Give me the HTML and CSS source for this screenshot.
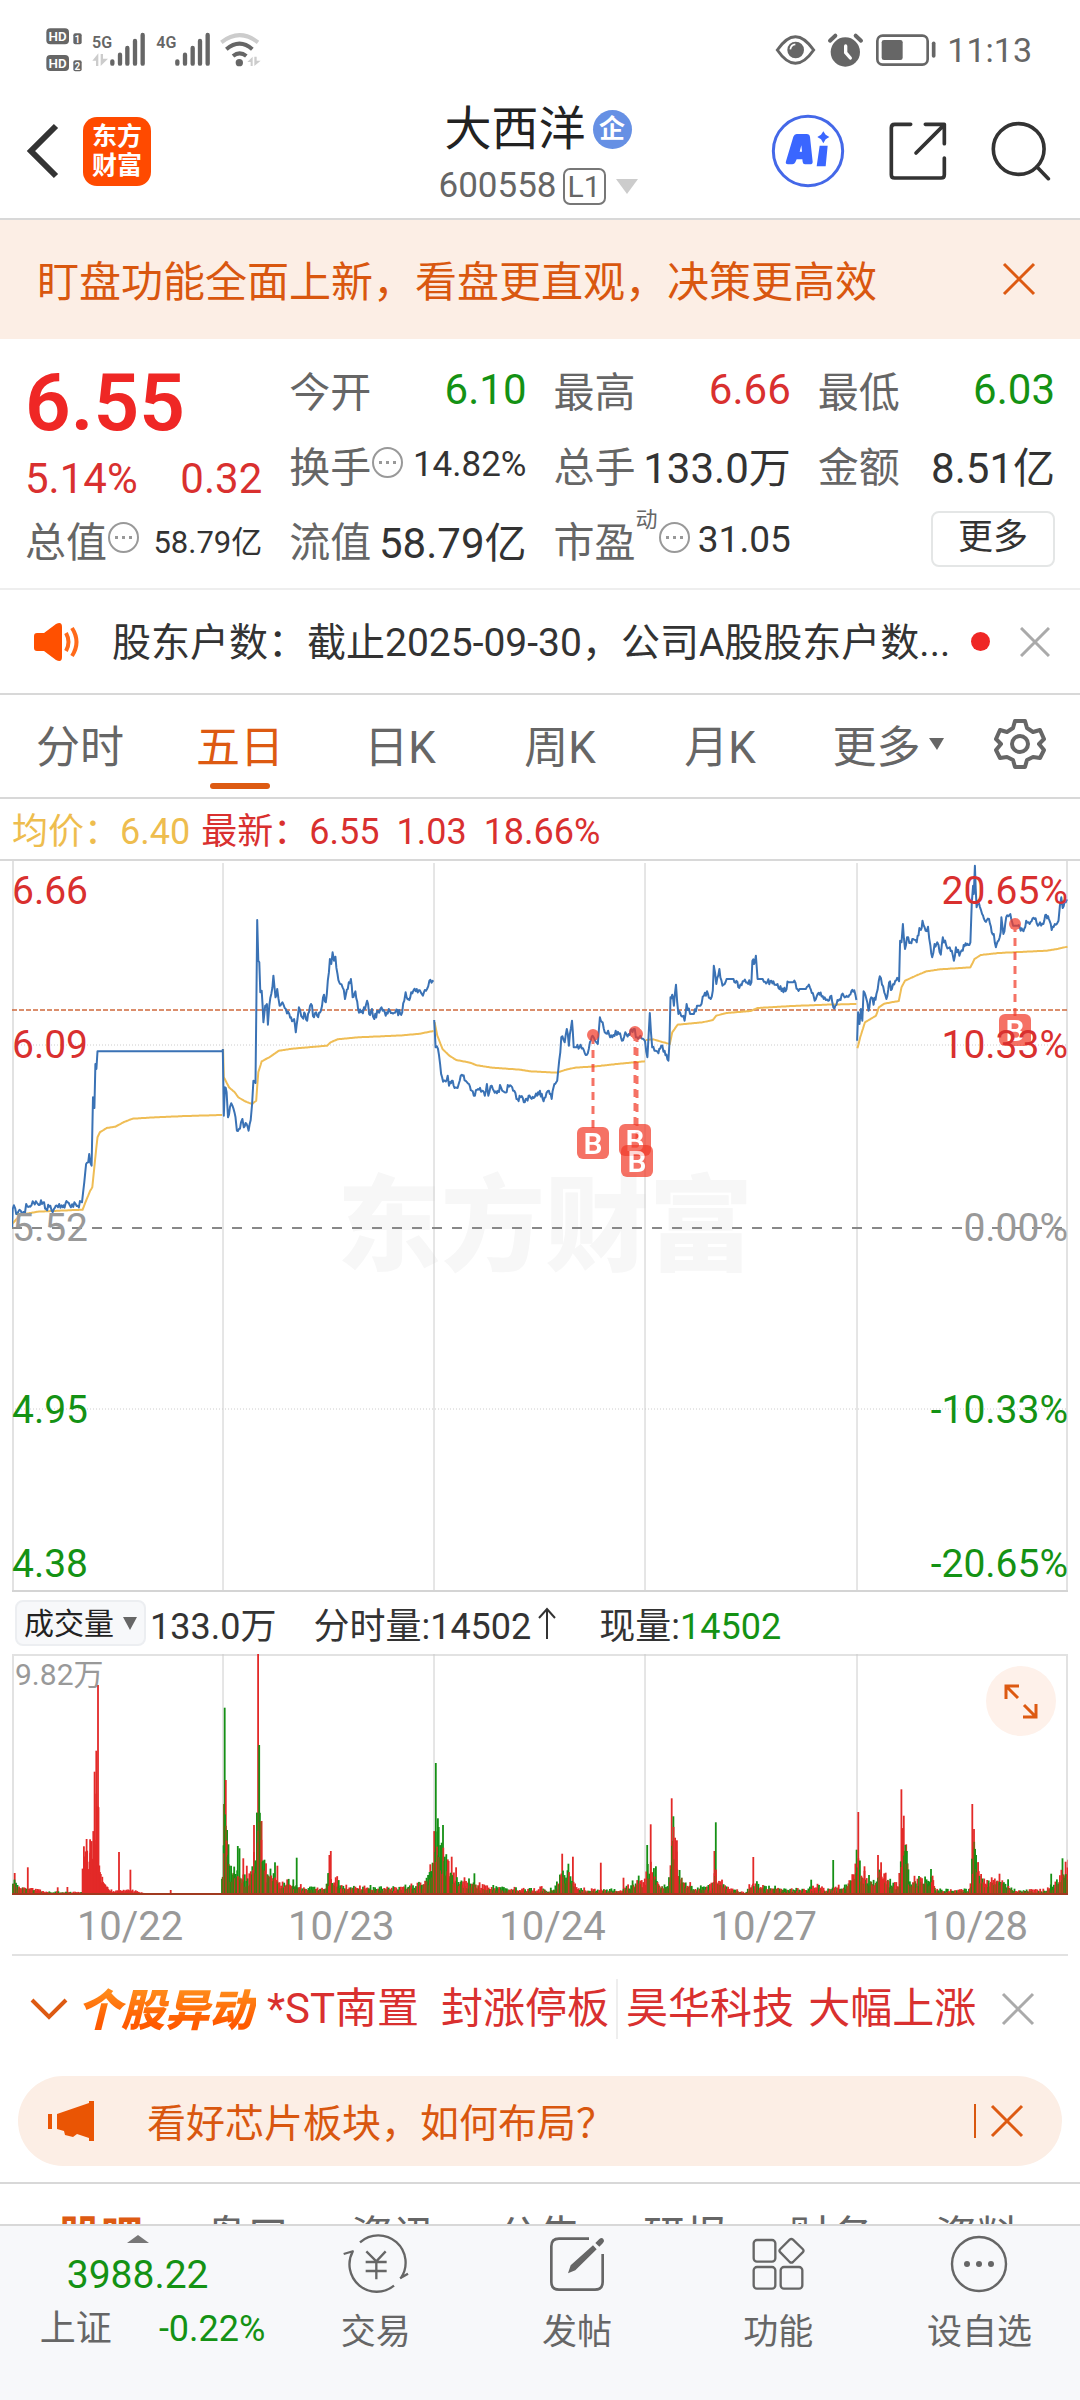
FILE: index.html
```html
<!DOCTYPE html>
<html lang="zh-CN">
<head>
<meta charset="utf-8">
<meta name="viewport" content="width=device-width">
<title>大西洋 600558</title>
<link rel="stylesheet" href="styles.css">
</head>
<body>
<header class="top">
  <div class="status">
    <svg class="status-left" viewBox="48 18 648 144" aria-hidden="true">
      <g fill="#666">
        <rect x="49" y="25" width="68" height="48" rx="12"/><rect x="130" y="40" width="25" height="33" rx="6"/>
        <rect x="49" y="105" width="68" height="48" rx="12"/><rect x="130" y="121" width="25" height="33" rx="6"/>
      </g>
      <g class="st-badge"><text x="83" y="63" font-size="40">HD</text><text x="83" y="143" font-size="40">HD</text><text x="142" y="68" font-size="30">1</text><text x="142" y="149" font-size="30">2</text></g>
      <g class="st-net"><text x="186" y="84">5G</text><text x="379" y="84">4G</text></g>
      <g fill="#ccc"><path d="M187 122l18-22v38h-7v-16zM212 138v-36h7v14h15zM652 126l16-16v28h-6v-12zM673 138v-28h7v12h12z"/></g>
      <g stroke="#666" stroke-width="13" stroke-linecap="round">
        <path d="M247 124v7M270 104v27M292 84v47M315 63v68M338 45v86M442 124v7M465 104v27M488 84v47M510 63v68M533 45v86"/>
      </g>
      <g fill="none" stroke-width="12"><path d="M574 67Q629 24 684 67" stroke="#ccc"/><path d="M589 88Q629 54 667 88M609 108Q629 92 649 108" stroke="#666"/></g>
      <circle cx="628" cy="128" r="11" fill="#666"/>
    </svg>
    <div class="status-right">
      <svg class="status-icons" viewBox="78 34 486 108" aria-hidden="true">
        <g fill="none" stroke="#666" stroke-width="9"><path d="M85 88Q139 8 194 88Q139 168 85 88Z"/><rect x="385" y="45" width="151" height="87" rx="16" stroke-width="8"/></g>
        <circle cx="140" cy="88" r="25" fill="#666"/><path d="M124 86q2-14 15-15" fill="none" stroke="#fff" stroke-width="5"/>
        <circle cx="289" cy="94" r="44" fill="#666"/><path d="M243 60l16-15M320 45l16 15" stroke="#666" stroke-width="12" stroke-linecap="round"/>
        <path d="M290 76v20l14 16" fill="none" stroke="#fff" stroke-width="10" stroke-linecap="round"/>
        <rect x="398" y="58" width="63" height="60" rx="7" fill="#666"/><path d="M554 68v38" stroke="#666" stroke-width="11" stroke-linecap="round"/>
      </svg>
      <time>11:13</time>
    </div>
  </div>
  <div class="titlebar">
    <div class="title-left">
      <button class="icon-btn" aria-label="返回"><svg width="36" height="60" viewBox="0 0 36 60"><path d="M31 5L6 30l25 25" fill="none" stroke="#333" stroke-width="6"/></svg></button>
      <a class="logo" href="#"><span>东方</span><span>财富</span></a>
    </div>
    <div class="title-mid">
      <h1>大西洋<span class="corp">企</span></h1>
      <button class="code">600558<span class="level">L1</span><svg width="22" height="15" viewBox="0 0 22 15"><path d="M0 0h22L11 15z" fill="#ccc"/></svg></button>
    </div>
    <div class="title-right">
      <button class="icon-btn" aria-label="Ai"><svg width="74" height="74" viewBox="65 283 222 222"><circle cx="176" cy="394" r="104" fill="none" stroke="#4468e8" stroke-width="9"/><path d="M142 343h30q9 0 10 9l8 74q0 8-8 8h-15q-6 0-7-7l-1-8h-17l-4 9q-3 6-9 6h-13q-9 0-6-9l22-74q3-8 10-8zM151 396h7l-2-19z" fill="#3a66ff" fill-rule="evenodd"/><path d="M211 378h24l-6 62h-27zM222 335l7 10 11 7-11 7-7 12-7-12-11-7 11-7z" fill="#3a66ff"/></svg></button>
      <button class="icon-btn" aria-label="分享"><svg width="60" height="60" viewBox="410 304 180 180"><path d="M478 314h-48q-10 0-10 10v141q0 10 10 10h139q10 0 10-10v-50M522 314h57v58M576 318l-82 82" fill="none" stroke="#333" stroke-width="11" stroke-linecap="round" stroke-linejoin="round"/></svg></button>
      <button class="icon-btn" aria-label="搜索"><svg width="60" height="60" viewBox="722 301 182 182"><circle cx="806" cy="386" r="77" fill="none" stroke="#333" stroke-width="11"/><path d="M861 440l35 36" stroke="#333" stroke-width="11" stroke-linecap="round"/></svg></button>
    </div>
  </div>
</header>

<main>
  <section class="banner"><p>盯盘功能全面上新，看盘更直观，决策更高效</p><button class="icon-btn orange" aria-label="关闭"><svg width="34" height="34" viewBox="0 0 34 34"><path d="M2 2l30 30M32 2L2 32"/></svg></button></section>

  <section class="quote">
    <div class="price red"><strong>6.55</strong><div class="pair"><span>5.14%</span><span>0.32</span></div></div>
    <div class="cell"><span class="k">今开</span><span class="green">6.10</span></div>
    <div class="cell"><span class="k">最高</span><span class="red">6.66</span></div>
    <div class="cell"><span class="k">最低</span><span class="green">6.03</span></div>
    <div class="cell"><span class="k">换手<i class="dots"></i></span><span class="v35">14.82%</span></div>
    <div class="cell"><span class="k">总手</span><span>133.0万</span></div>
    <div class="cell"><span class="k">金额</span><span>8.51亿</span></div>
    <div class="cell"><span class="k">总值<i class="dots"></i></span><span class="v32">58.79亿</span></div>
    <div class="cell"><span class="k">流值</span><span>58.79亿</span></div>
    <div class="cell"><span class="k">市盈<sup>动</sup><i class="dots"></i></span><span class="v38">31.05</span></div>
    <div class="cell end"><button class="more">更多</button></div>
  </section>

  <section class="notice">
    <svg width="46" height="38" viewBox="0 0 46 38"><path d="M0 13q0-3 3-3h7L22 1q6-3 6 3v30q0 6-6 3L10 28H3q-3 0-3-3z" fill="#ff5000"/><path d="M32 10q5 9 0 18M38 5q9 14 0 28" fill="none" stroke="#ff6a1a" stroke-width="4"/></svg>
    <p>股东户数：截止2025-09-30，公司A股股东户数...</p>
    <span class="dot"></span>
    <button class="icon-btn grey" aria-label="关闭"><svg width="30" height="30" viewBox="0 0 30 30"><path d="M1 1l28 28M29 1L1 29"/></svg></button>
  </section>

  <nav class="periods">
    <button>分时</button><button class="on">五日</button><button>日K</button><button>周K</button><button>月K</button><button class="drop">更多<svg width="15" height="12" viewBox="0 0 15 12"><path d="M0 0h15L8 12z" fill="#666"/></svg></button>
    <button aria-label="设置"><svg width="52" height="52" viewBox="0 0 52 52" fill="none" stroke="#666" stroke-width="4" stroke-linejoin="round"><path d="M21 3h10l2 7 6 4 7-2 4 9-5 5 5 6-4 8-7-1-6 3-2 7H21l-2-7-6-3-7 1-4-8 5-6-5-5 4-9 7 2 6-4z"/><circle cx="26" cy="26" r="8"/></svg></button>
  </nav>

  <p class="legend"><span class="avg">均价：<b>6.40</b></span><span class="red">最新：<b>6.55</b><b>1.03</b><b>18.66%</b></span></p>

  <figure class="chart">
    <svg viewBox="0 0 1056 731" aria-label="五日走势">
      <text class="mark" x="533" y="402" text-anchor="middle">东方财富</text>
      <path d="M0 184h1056M0 548h1056" stroke="#ccc" stroke-dasharray="1 2"/>
      <path d="M211 2v728M422 2v728M633 2v728M845 2v728" stroke="#ccc"/>
      <path d="M1 0v730M1055 0v730" stroke="#e2e2e2" stroke-width="2"/>
      <path d="M0 730h1056" stroke="#d4d4d4" stroke-width="2"/>
      <path d="M0 367h1056" stroke="#888" stroke-width="2" stroke-dasharray="10 10"/>
      <path d="M0 149h1056" stroke="#cf6a3c" stroke-width="1.4" stroke-dasharray="5 2"/>
      <g id="avg" fill="none" stroke="#efbd55" stroke-width="2"></g>
      <g id="price" fill="none" stroke="#3a72b5" stroke-width="2" stroke-linejoin="round"></g>
      <g class="buys" opacity=".72">
        <path d="M581 175v92M623 172v92M625 173v112M1003 63v92" stroke="#f23c2a" stroke-width="3" stroke-dasharray="8 6"/>
        <g fill="#f23c2a"><circle cx="581" cy="174" r="6"/><circle cx="623" cy="171" r="6"/><circle cx="625" cy="173" r="6"/><circle cx="1003" cy="63" r="6"/></g>
      </g>
      <g class="tag"><rect x="565" y="266" width="32" height="32" rx="6"/><text x="581" y="293">B</text></g>
      <g class="tag"><rect x="607" y="263" width="32" height="32" rx="6"/><text x="623" y="290">B</text></g>
      <g class="tag"><rect x="609" y="284" width="32" height="32" rx="6"/><text x="625" y="311">B</text></g>
      <g class="tag"><rect x="987" y="153" width="32" height="32" rx="6"/><text x="1003" y="180">B</text></g>
    </svg>
    <div class="scale y1 red"><span>6.66</span><span>20.65%</span></div>
    <div class="scale y2 red"><span>6.09</span><span>10.33%</span></div>
    <div class="scale y3 mid"><span>5.52</span><span>0.00%</span></div>
    <div class="scale y4 green"><span>4.95</span><span>-10.33%</span></div>
    <div class="scale y5 green"><span>4.38</span><span>-20.65%</span></div>
  </figure>

  <div class="volbar">
    <span class="picker"><select aria-label="指标"><option>成交量</option></select><svg width="14" height="13" viewBox="0 0 14 13"><path d="M0 0h14L7 13z" fill="#666"/></svg></span>
    <span>133.0万</span><span class="v2">分时量:14502<svg width="20" height="32" viewBox="0 0 20 32"><path d="M10 32V2M2 11l8-9 8 9" fill="none" stroke="#333" stroke-width="2"/></svg></span><span class="v3">现量:<em class="green">14502</em></span>
  </div>

  <figure class="volume">
    <svg viewBox="0 0 1056 242" aria-label="成交量">
      <path d="M0 1h1056M1 0v241M1055 0v241" stroke="#e2e2e2" stroke-width="2"/>
      <path d="M211 0v240M422 0v240M633 0v240M845 0v240" stroke="#ccc"/>
      <g id="bars"></g>
      <path d="M0 240h1056" stroke="#a03a20" stroke-width="2"/>
    </svg>
    <span class="vmax">9.82万</span>
    <button class="expand" aria-label="全屏"><svg width="34" height="35" viewBox="0 0 34 35"><path d="M15 2H2v13M2 2l12 12M19 33h13V20M32 33L20 21" fill="none" stroke="#dd5a12" stroke-width="3"/></svg></button>
  </figure>
  <div class="dates"><span>10/22</span><span>10/23</span><span>10/24</span><span>10/27</span><span>10/28</span></div>

  <section class="moves">
    <button class="icon-btn orange" aria-label="展开"><svg class="bold" width="38" height="24" viewBox="0 0 38 24"><path d="M2 3l17 17L36 3"/></svg></button>
    <strong>个股异动</strong>
    <a class="first" href="#"><span>*ST南置</span><span>封涨停板</span></a>
    <a href="#"><span>昊华科技</span><span>大幅上涨</span></a>
    <button class="icon-btn grey" aria-label="关闭"><svg width="34" height="34" viewBox="0 0 34 34"><path d="M2 2l30 30M32 2L2 32"/></svg></button>
  </section>

  <section class="promo">
    <svg width="46" height="40" viewBox="0 0 46 40"><path d="M0 13h4v15H0zM9 13L41 2V0h5v40h-5v-3l-12-4-4 3-8-2-1-4-7-2z" fill="#ea5504"/></svg>
    <a href="#">看好芯片板块，如何布局？</a>
    <button class="icon-btn orange" aria-label="关闭"><svg width="34" height="34" viewBox="0 0 34 34"><path d="M2 2l30 30M32 2L2 32"/></svg></button>
  </section>

  <nav class="sections"><a class="on" href="#">股吧</a><a href="#">盘口</a><a href="#">资讯</a><a href="#">公告</a><a href="#">研报</a><a href="#">财务</a><a href="#">资料</a></nav>
</main>

<nav class="bottom">
  <a class="index" href="#">
    <svg width="22" height="8" viewBox="0 0 22 8"><path d="M11 0l11 8H0z" fill="#777"/></svg>
    <span class="pt green">3988.22</span>
    <span class="chg"><span>上证</span><span class="green">-0.22%</span></span>
  </a>
  <a href="#"><svg width="68" height="62" viewBox="64 38 204 186" fill="none" stroke="#666" stroke-width="7"><path d="M118 66A82 82 0 0 1 240 174M220 196A82 82 0 0 1 97 92M69 101l30-9M262 160l-24 14M137 93l30 30 28-30M135 125h63M135 152h63M167 123v54"/></svg>交易</a>
  <a href="#"><svg width="68" height="62" viewBox="669 38 204 186"><path d="M807 55h-90q-23 0-23 23v107q0 23 23 23h108q23 0 23-23v-84" fill="none" stroke="#666" stroke-width="8"/><path d="M819 75l11 12-64 63-22 9 8-24zM826 68l12-12q7-6 12 0 5 6-1 12l-11 11z" fill="#666"/></svg>发帖</a>
  <a href="#"><svg width="68" height="62" viewBox="1272 38 204 186" fill="none" stroke="#666" stroke-width="7"><rect x="1301" y="59" width="65" height="65" rx="10"/><rect x="1301" y="140" width="65" height="65" rx="10"/><rect x="1382" y="140" width="65" height="65" rx="10"/><path d="M1409 58q5-4 10 0l29 28q5 5 0 10l-29 29q-5 4-10 0l-28-29q-5-5 0-10z"/></svg>功能</a>
  <a href="#"><svg width="68" height="62" viewBox="0 0 68 62"><circle cx="34" cy="31" r="27" fill="none" stroke="#666" stroke-width="2.4"/><g fill="#666"><circle cx="22" cy="31" r="3"/><circle cx="34" cy="31" r="3"/><circle cx="46" cy="31" r="3"/></g></svg>设自选</a>
</nav>
<script src="chart.js"></script>
</body>
</html>
```
FILE: styles.css
```css
* { box-sizing: border-box; }
body { margin: 0; height: 100vh; display: flex; flex-direction: column; background: #fff; color: #333; font-family: Roboto, "Noto Sans CJK SC", sans-serif; font-size: 42px; }
p, h1, figure { margin: 0; font-weight: 400; }
svg { display: block; flex: none; }
button { font: inherit; color: inherit; background: none; border: 0; padding: 0; }
a { color: inherit; text-decoration: none; }
em, i { font-style: normal; }
main { flex: 1; min-height: 0; overflow: hidden; }
.red { color: #d9302f; }
.green { color: #149214; }
.icon-btn { display: flex; flex: none; }
.orange svg, .grey svg { fill: none; stroke: #dd5a12; stroke-width: 3; }
.grey svg { stroke: #aaa; }
.orange .bold { stroke-width: 4; }

.top { border-bottom: 2px solid #d8d8d8; }
.status { height: 84px; padding: 16px 48px 0 46px; display: flex; justify-content: space-between; align-items: center; }
.status-left { width: 216px; height: 48px; }
.st-badge text { fill: #fff; font-weight: 600; text-anchor: middle; }
.st-net text { fill: #666; font-size: 48px; font-weight: 600; }
.status-right { display: flex; align-items: center; gap: 10px; color: #666; font-size: 34px; }
.status-icons { width: 162px; height: 36px; }
.titlebar { height: 134px; padding: 0 29px 0 25px; display: grid; grid-template-columns: 1fr auto 1fr; align-items: center; }
.title-left { display: flex; align-items: center; gap: 22px; }
.logo { width: 68px; height: 69px; border-radius: 14px; background: #ff4a00; color: #fff; font-size: 25px; font-weight: 700; line-height: 29px; display: flex; flex-direction: column; justify-content: center; align-items: center; }
.title-mid { display: flex; flex-direction: column; align-items: center; padding-top: 6px; }
h1 { display: flex; align-items: center; gap: 7px; font-size: 47px; line-height: 64px; color: #222; }
.corp { width: 39px; height: 39px; border-radius: 50%; background: #6690e4; color: #fff; font-size: 26px; line-height: 38px; font-weight: 700; text-align: center; }
.code { display: flex; align-items: center; gap: 6px; font-size: 35px; line-height: 50px; color: #666; }
.level { border: 2px solid #777; border-radius: 7px; font-size: 30px; line-height: 33px; padding: 0 3px; }
.code svg { margin-left: 4px; }
.title-right { display: flex; align-items: center; justify-content: flex-end; gap: 43px; }

.banner { height: 119px; background: #fceee5; color: #d9570f; padding: 0 44px 2px 37px; display: flex; justify-content: space-between; align-items: center; }

.quote { padding: 14px 25px 10px; display: grid; grid-template-columns: repeat(4, 1fr); grid-auto-rows: 75px; column-gap: 27px; border-bottom: 2px solid #eee; }
.price { grid-row: span 2; display: flex; flex-direction: column; }
.price strong { font-size: 80px; line-height: 100px; font-weight: 600; color: #ef2725; }
.pair, .cell { display: flex; justify-content: space-between; align-items: center; white-space: nowrap; }
.pair { line-height: 52px; }
.cell { padding-bottom: 3px; }
.k { display: flex; align-items: center; color: #666; font-size: 41px; }
.k sup { font-size: 22px; align-self: flex-start; line-height: 22px; vertical-align: baseline; }
.dots { width: 31px; height: 31px; margin: 0 0 4px 1px; border: 2px solid #999; border-radius: 50%; background: radial-gradient(circle, #999 2px, transparent 2px) 0 0 / 7px 100% content-box; background-repeat: repeat-x; padding: 0 3px; }
.v32 { font-size: 31px; }
.v35 { font-size: 35px; }
.v38 { font-size: 37px; }
.end { justify-content: flex-end; }
.more { width: 124px; height: 56px; border: 2px solid #e4e6e6; border-radius: 8px; font-size: 35px; line-height: 48px; padding-bottom: 3px; }

.notice { height: 105px; padding: 0 30px 0 34px; display: flex; align-items: center; border-bottom: 2px solid #d8d8d8; font-size: 39px; }
.notice p { flex: 1; margin-left: 32px; padding-bottom: 5px; white-space: nowrap; }
.dot { width: 19px; height: 19px; border-radius: 50%; background: #ef2725; margin-right: 30px; }

.periods { height: 104px; display: grid; grid-template-columns: repeat(6, 4fr) 3fr; border-bottom: 2px solid #d8d8d8; color: #666; font-size: 44px; }
.periods button { display: flex; align-items: center; justify-content: center; gap: 8px; padding-bottom: 4px; white-space: nowrap; }
.periods .drop { padding-left: 16px; }
.periods .on { color: #dd5a12; position: relative; }
.periods .on::after { content: ""; position: absolute; left: 50%; bottom: 8px; width: 60px; margin-left: -30px; height: 6px; border-radius: 3px; background: #dd5a12; }

.legend { height: 62px; padding: 0 0 2px 12px; display: flex; align-items: center; gap: 11px; font-size: 36px; border-bottom: 2px solid #d8d8d8; }
.legend b { font-weight: 400; margin-right: 17px; }
.legend .avg b { margin: 0; }
.avg { color: #eebd4e; }

.chart, .volume { position: relative; margin: 0 12px; }
.chart svg, .volume > svg { width: 100%; height: auto; }
.mark { font-size: 104px; font-weight: 900; fill: #f7f7f7; }
.tag { opacity: .72; }
.tag rect { fill: #f23c2a; }
.tag text { fill: #fff; font-size: 30px; font-weight: 600; text-anchor: middle; }
.scale { position: absolute; left: 0; right: 0; display: flex; justify-content: space-between; font-size: 39px; line-height: 40px; margin-top: -19px; }
.mid, .vmax, .dates { color: #999; }
.y1 { top: 4%; }
.y2 { top: 25%; }
.y3 { top: 50%; }
.y4 { top: 75%; }
.y5 { top: 96%; }

.volbar { height: 62px; padding-left: 15px; display: flex; align-items: center; font-size: 36px; white-space: nowrap; }
.picker { display: flex; align-items: center; height: 46px; width: 131px; margin-right: 4px; border: 2px solid #eceef1; border-radius: 8px; background: #f7f8fa; padding-left: 7px; }
.picker select { appearance: none; border: 0; background: none; font: inherit; font-size: 30px; color: #222; padding: 0; width: 99px; }
.volbar .v2 { margin-left: 37px; display: flex; align-items: center; gap: 6px; }
.volbar .v3 { margin-left: 42px; }
.vmax { position: absolute; left: 3px; top: 6px; font-size: 30px; line-height: 30px; }
.expand { position: absolute; right: 12px; top: 12px; width: 70px; height: 70px; border-radius: 50%; background: #fef1ea; display: flex; align-items: center; justify-content: center; }
.dates { margin: 0 12px; height: 60px; display: grid; grid-template-columns: repeat(5, 1fr); font-size: 40px; line-height: 62px; text-align: center; border-bottom: 2px solid #e2e2e2; }
.dates span { padding-left: 25px; }

.moves { height: 108px; padding: 0 45px 3px 30px; display: flex; align-items: center; white-space: nowrap; color: #d9302f; }
.moves strong { margin: 0 11px 4px 9px; padding-right: 3px; font-size: 44px; font-weight: 900; font-style: italic; background: linear-gradient(#ff8a1a 25%, #ff5a00 75%); background-clip: text; color: transparent; }
.moves a { display: flex; gap: 14px; line-height: 60px; }
.moves .first { gap: 22px; padding-right: 7px; margin-right: 8px; border-right: 2px solid #eee; }
.moves .grey { margin-left: auto; }

.promo { height: 90px; margin: 12px 18px 16px; padding: 0 38px 0 30px; border-radius: 45px; background: #fceee5; color: #d9570f; display: flex; align-items: center; font-size: 39px; }
.promo a { flex: 1; margin-left: 53px; padding-bottom: 3px; }
.promo button { border-left: 2px solid #d9570f; padding-left: 14px; }

.sections { border-top: 2px solid #d8d8d8; padding: 28px 30px 0 28px; display: grid; grid-template-columns: repeat(7, 1fr); text-align: center; color: #666; line-height: 50px; }
.sections .on { color: #dd5a12; font-weight: 700; }

.bottom { height: 176px; border-top: 2px solid #d8d8d8; background: #f7f8fa; display: grid; grid-template-columns: 275fr repeat(4, 201fr); color: #666; font-size: 35px; }
.bottom a { display: flex; flex-direction: column; align-items: center; line-height: 50px; padding-top: 7px; gap: 13px; }
.bottom .index { padding-top: 9px; gap: 4px; }
.pt { font-size: 39px; line-height: 56px; }
.chg { display: flex; gap: 47px; margin-left: 30px; font-size: 36px; line-height: 44px; }
```
FILE: chart.js
```js
// Series are stored as flat x,y lists, five trading days each.
const price = [
  [35,1130,37,1075,44,1073,50,1090,60,1080,72,1090,76,1060,88,1068,95,1052,110,1060,128,1055,134,1075,146,1065,150,1080,162,1065,172,1060,182,1070,196,1055,206,1070,216,1055,226,1065,238,1055,242,1020,250,940,256,935,259,910,262,935,266,945,270,740,274,772,277,640,280,655,283,602,647,602],
  [647,595,650,795,653,710,658,725,662,800,668,768,675,765,684,800,688,840,694,835,700,815,704,805,708,830,716,820,722,840,728,808,732,760,736,690,742,697,747,208,750,330,753,335,756,425,760,420,765,515,770,465,775,460,778,522,782,465,788,430,794,375,800,440,805,415,812,465,820,455,830,475,840,490,848,512,854,505,859,545,864,505,868,470,878,500,886,490,892,510,903,460,912,500,918,485,924,500,932,480,941,432,946,455,952,390,958,325,962,340,966,305,970,330,974,318,980,370,988,400,995,410,1002,445,1010,415,1019,385,1024,440,1032,422,1040,475,1048,485,1060,475,1066,450,1072,490,1080,475,1087,505,1098,480,1108,470,1120,495,1132,480,1145,486,1168,485,1174,450,1178,425,1186,445,1194,425,1210,415,1225,430,1240,415,1247,390,1259,393],
  [1261,508,1265,590,1272,595,1278,640,1284,680,1292,690,1300,675,1304,705,1312,690,1320,712,1332,700,1341,672,1352,690,1362,700,1370,720,1379,735,1388,715,1400,720,1408,735,1414,700,1418,735,1428,705,1440,722,1455,710,1465,725,1478,708,1490,720,1500,745,1512,740,1524,755,1535,735,1550,742,1560,735,1568,720,1576,745,1584,740,1594,720,1602,745,1610,700,1618,690,1624,630,1630,560,1640,575,1646,535,1652,585,1661,510,1666,590,1674,590,1686,582,1696,600,1707,608,1713,575,1721,555,1728,570,1736,580,1742,500,1750,515,1756,545,1766,540,1778,560,1788,540,1798,550,1806,570,1816,545,1826,550,1840,535,1850,560,1860,555,1873,572],
  [1873,570,1880,620,1887,487,1894,590,1904,600,1912,608,1920,585,1930,600,1941,630,1944,580,1947,440,1952,432,1957,465,1963,402,1970,490,1978,495,1988,510,1994,460,2004,490,2015,490,2024,465,2034,465,2044,435,2056,430,2064,445,2070,420,2073,345,2080,400,2089,355,2098,405,2110,385,2130,385,2147,412,2160,392,2182,395,2185,330,2190,340,2195,315,2200,385,2215,385,2228,395,2240,390,2258,400,2275,425,2290,395,2304,395,2322,415,2340,415,2352,410,2366,450,2380,432,2395,440,2405,450,2414,435,2420,470,2432,448,2450,435,2464,438,2478,423,2484,432,2487,448],
  [2489,570,2492,485,2496,520,2500,475,2504,510,2508,422,2516,445,2522,480,2530,440,2537,462,2545,430,2552,390,2558,382,2568,425,2574,445,2582,395,2590,415,2600,390,2611,392,2614,270,2618,275,2622,220,2628,295,2634,260,2644,275,2652,265,2662,275,2670,232,2674,238,2679,210,2688,240,2695,228,2702,285,2707,320,2714,280,2722,275,2732,312,2738,260,2748,285,2758,290,2764,300,2770,330,2776,290,2786,315,2796,300,2804,278,2818,275,2822,155,2826,105,2828,130,2831,45,2836,170,2842,155,2852,190,2860,210,2872,205,2880,245,2886,250,2892,290,2900,270,2906,245,2908,200,2914,250,2922,200,2934,190,2942,225,2956,225,2964,240,2972,242,2980,210,2990,220,3004,205,3014,225,3030,220,3038,192,3046,205,3054,238,3066,222,3074,210,3078,165,3082,140,3086,172,3092,150,3100,148]
];
const avg = [
  [35,1120,60,1092,110,1083,240,1077,250,1050,262,1020,268,1010,276,930,283,860,290,845,310,832,335,828,360,814,385,804,450,800,540,796,645,793],
  [648,595,650,680,665,710,682,725,692,740,712,752,732,760,744,750,750,665,760,632,785,618,810,600,850,594,950,585,960,575,980,566,1040,560,1170,554,1220,549,1259,541],
  [1262,515,1270,555,1285,595,1305,615,1325,628,1365,636,1385,644,1430,651,1510,657,1540,662,1618,666,1640,658,1670,651,1730,647,1800,639,1873,632],
  [1875,568,1897,566,1920,573,1945,580,1952,545,1968,522,2040,515,2070,508,2080,495,2110,487,2180,481,2200,472,2300,466,2400,462,2487,460],
  [2490,593,2498,560,2512,515,2544,495,2552,470,2568,459,2610,451,2618,410,2628,390,2660,375,2690,362,2730,356,2818,350,2830,325,2848,313,2900,307,2960,304,3040,300,3070,295,3100,288]
];
let seed = 7;
const rnd = () => (seed = (seed * 16807) % 2147483647) / 2147483647;
const X = x => (x / 2.904 - 12).toFixed(1);
const Y = y => ((y - 31) / 3).toFixed(1);

function line(points, jitter) {
  let d = `M${X(points[0])} ${Y(points[1])}`;
  for (let i = 2; i < points.length; i += 2) {
    const [x0, y0, x1, y1] = points.slice(i - 2, i + 2);
    const n = y0 === y1 ? 1 : Math.max(1, Math.round((x1 - x0) / 3));
    for (let k = 1; k <= n; k++) {
      const j = k < n ? (rnd() - 0.5) * jitter : 0;
      d += `L${X(x0 + (x1 - x0) * k / n)} ${Y(y0 + (y1 - y0) * k / n + j)}`;
    }
  }
  return `<path d="${d}"/>`;
}
document.getElementById('price').innerHTML = price.map(p => line(p, 20)).join('');
document.getElementById('avg').innerHTML = avg.map(p => line(p, 0)).join('');

// Volume: an envelope of typical heights plus the single tall bars.
const env = [35,55,45,42,70,32,100,22,130,12,236,10,238,130,262,150,268,200,276,360,282,400,286,100,300,45,320,18,380,18,420,5,640,4,647,250,652,330,656,180,664,110,680,90,700,70,720,70,732,120,740,180,750,420,756,220,766,100,800,90,806,52,850,48,860,44,880,28,940,26,950,66,975,62,990,36,1100,28,1160,28,1220,42,1250,90,1258,200,1268,220,1285,160,1300,105,1330,60,1370,48,1400,34,1500,24,1560,20,1568,34,1590,16,1613,36,1628,110,1648,85,1668,34,1700,20,1808,20,1838,48,1873,75,1878,130,1893,95,1908,48,1933,30,1940,66,1948,240,1956,200,1968,90,1998,45,2018,26,2063,36,2074,120,2080,65,2108,30,2160,8,2183,56,2208,32,2308,22,2338,22,2368,36,2398,18,2428,32,2448,32,2478,80,2488,140,2498,100,2518,62,2538,52,2550,110,2568,80,2588,38,2608,46,2616,220,2628,170,2638,60,2668,62,2708,66,2713,20,2808,20,2818,66,2824,240,2833,120,2848,66,2898,66,2918,36,2948,16,3028,20,3058,38,3078,80,3100,110];
const tall = [[40,66,0],[78,83,0],[165,23,0],[193,24,0],[241,146,0],[249,168,0],[259,167,0],[272,370,0],[277,433,0],[282,630,0],[343,129,0],[376,76,0],[493,15,0],[648,273,2],[650,562,1],[653,345,0],[657,195,1],[661,152,1],[688,147,1],[693,140,1],[704,110,0],[714,88,0],[735,210,0],[747,723,0],[750,450,1],[757,222,0],[796,98,1],[803,88,0],[859,112,1],[954,120,0],[958,132,0],[1247,92,0],[1263,396,1],[1269,230,1],[1284,210,1],[1300,102,0],[1309,115,0],[1322,83,0],[1375,65,1],[1630,124,0],[1648,94,1],[1661,115,0],[1742,97,0],[1808,52,0],[1877,150,1],[1887,212,0],[1902,86,1],[1948,290,0],[1953,236,1],[1963,164,0],[2072,132,0],[2076,218,1],[2185,114,0],[2353,46,1],[2417,105,1],[2485,136,1],[2490,249,0],[2508,86,0],[2547,120,0],[2615,317,0],[2622,238,0],[2629,152,0],[2701,78,1],[2821,273,0],[2826,198,0],[2832,120,1],[2900,64,0],[2925,47,1],[3050,64,1],[3083,110,1],[3092,100,0],[3100,106,0]];
const tint = ['#e32a28', '#159015', '#7c5f14'];
const bar = (x, h, c) => `<rect x="${X(x)}" y="${(241 - h / 3).toFixed(1)}" width="1.8" height="${(h / 3).toFixed(1)}" fill="${tint[c]}"/>`;
let out = tall.map(t => bar(...t)).join('');
let e = 0;
for (let x = 35; x < 3100; x += 4.4) {
  while (env[e + 2] < x) e += 2;
  const t = (x - env[e]) / (env[e + 2] - env[e]);
  const h = env[e + 1] + (env[e + 3] - env[e + 1]) * t;
  const solo = x > 236 && x < 640;
  out += bar(x, h * (0.5 + rnd() * 0.5), solo || rnd() < 0.5 ? 0 : 1);
  out += bar(x + 2, h * (0.35 + rnd() * 0.35), solo ? 0 : rnd() < 0.6 ? 2 : 0);
}
document.getElementById('bars').innerHTML = out;
```
